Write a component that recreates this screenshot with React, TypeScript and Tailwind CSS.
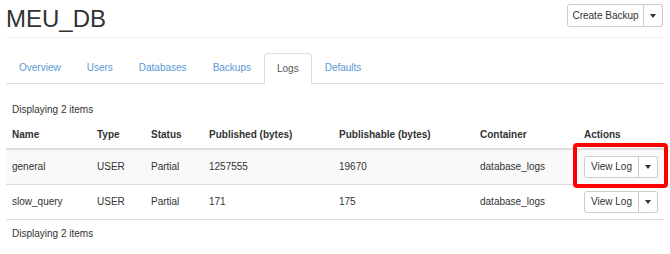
import { ReactNode } from "react";

type LogRow = {
  name: string;
  type: string;
  status: string;
  published: string;
  publishable: string;
  container: string;
};

const tabs = ["Overview", "Users", "Databases", "Backups", "Logs", "Defaults"];

const rows: LogRow[] = [
  {
    name: "general",
    type: "USER",
    status: "Partial",
    published: "1257555",
    publishable: "19670",
    container: "database_logs",
  },
  {
    name: "slow_query",
    type: "USER",
    status: "Partial",
    published: "171",
    publishable: "175",
    container: "database_logs",
  },
];

const columns = [
  { label: "Name", width: "w-[85px]" },
  { label: "Type", width: "w-[54px]" },
  { label: "Status", width: "w-[58px]" },
  { label: "Published (bytes)", width: "w-[130px]" },
  { label: "Publishable (bytes)", width: "w-[141px]" },
  { label: "Container", width: "w-[104px]" },
  { label: "Actions", width: "w-[86px]" },
];

function Caret() {
  return (
    <span className="inline-block w-0 h-0 border-t-[4px] border-t-[#333] border-x-[3.5px] border-x-transparent" />
  );
}

function SplitButton({ label, mainWidth, height }: { label: string; mainWidth: string; height: string }) {
  return (
    <div className={`inline-flex ${height}`}>
      <button
        className={`${mainWidth} h-full bg-white border border-[#ccc] rounded-l-[3px] text-[10px] text-[#333] flex items-center justify-center`}
      >
        {label}
      </button>
      <button className="w-[19px] h-full bg-white border border-l-0 border-[#ccc] rounded-r-[3px] flex items-center justify-center">
        <Caret />
      </button>
    </div>
  );
}

function Cell({ children }: { children: ReactNode }) {
  return <td className="pl-[6px] h-[35px] align-middle">{children}</td>;
}

export default function App() {
  return (
    <div
      className="relative w-[670px] h-[254px] bg-white px-[6px] text-[10px] leading-[14px] text-[#333] overflow-hidden"
      style={{ fontFamily: '"Liberation Sans", Arial, sans-serif' }}
    >
      <div className="flex items-start justify-between border-b border-[#eee] h-[38px]">
        <h1 className="pt-[6px] text-[24px] leading-[26px] font-normal">MEU_DB</h1>
        <div className="mt-[4px] mr-[1px]">
          <SplitButton label="Create Backup" mainWidth="w-[77px]" height="h-[23px]" />
        </div>
      </div>

      <ul className="mt-[15px] flex border-b border-[#ddd] h-[31px]">
        {tabs.map((t) =>
          t === "Logs" ? (
            <li
              key={t}
              className="px-[12px] -mb-px h-[31px] border border-[#ddd] border-b-white rounded-t-[4px] bg-white text-[#555] flex items-center"
            >
              {t}
            </li>
          ) : (
            <li key={t} className="px-[13px] h-[30px] text-[#5a9ad6] flex items-center">
              {t}
            </li>
          )
        )}
      </ul>

      <div className="mt-[19px] pl-[6px]">Displaying 2 items</div>

      <table className="table-fixed w-[658px] border-collapse">
        <thead>
          <tr className="border-b-2 border-[#ddd]">
            {columns.map((c) => (
              <th key={c.label} className={`${c.width} pl-[6px] pt-[11px] pb-[6px] text-left font-bold`}>
                {c.label}
              </th>
            ))}
          </tr>
        </thead>
        <tbody>
          {rows.map((r, i) => (
            <tr key={r.name} className={`border-b border-[#ddd] ${i === 0 ? "bg-[#f9f9f9]" : "bg-white"}`}>
              <Cell>{r.name}</Cell>
              <Cell>{r.type}</Cell>
              <Cell>{r.status}</Cell>
              <Cell>{r.published}</Cell>
              <Cell>{r.publishable}</Cell>
              <Cell>{r.container}</Cell>
              <Cell>
                <SplitButton label="View Log" mainWidth="w-[55px]" height="h-[22px]" />
              </Cell>
            </tr>
          ))}
        </tbody>
      </table>

      <div className="mt-[7px] pl-[6px]">Displaying 2 items</div>

      {/* annotation box around the first row's action */}
      <div className="absolute left-[573px] top-[143px] w-[95px] h-[45px] border-[4px] border-[#ff0000] rounded-[4px] pointer-events-none" />
    </div>
  );
}
